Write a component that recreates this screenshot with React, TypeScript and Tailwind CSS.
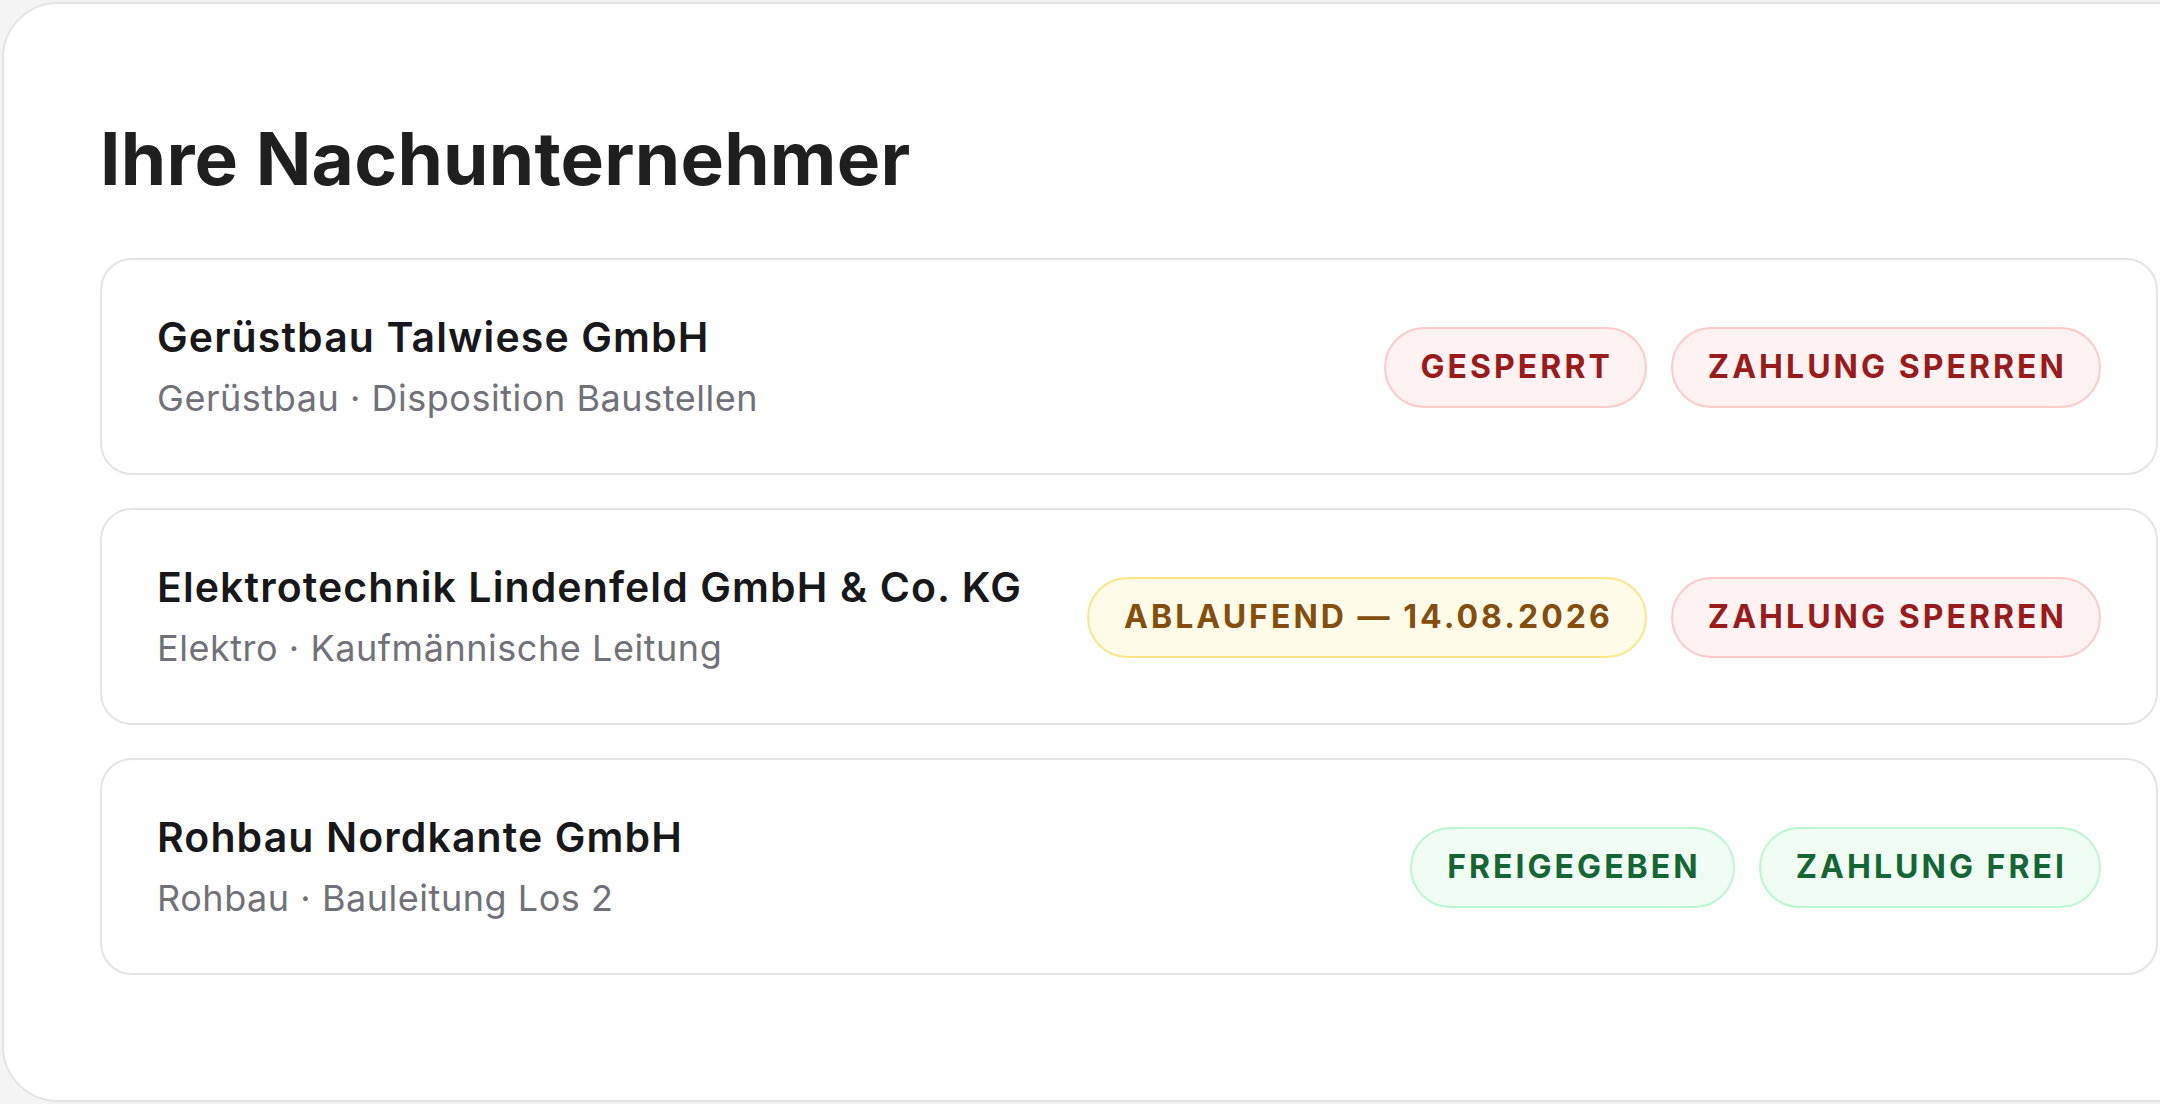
type Tone = 'red' | 'yellow' | 'green';

const toneClass: Record<Tone, string> = {
  red: 'bg-[#fef2f2] border-[#fecaca] text-[#991b1b]',
  yellow: 'bg-[#fefce8] border-[#fde68a] text-[#854d0e]',
  green: 'bg-[#f0fdf4] border-[#bbf7d0] text-[#166534]',
};

const subcontractors: {
  name: string;
  meta: string;
  status: { label: string; tone: Tone };
  payment: { label: string; tone: Tone };
}[] = [
  {
    name: 'Gerüstbau Talwiese GmbH',
    meta: 'Gerüstbau · Disposition Baustellen',
    status: { label: 'Gesperrt', tone: 'red' },
    payment: { label: 'Zahlung sperren', tone: 'red' },
  },
  {
    name: 'Elektrotechnik Lindenfeld GmbH & Co. KG',
    meta: 'Elektro · Kaufmännische Leitung',
    status: { label: 'Ablaufend — 14.08.2026', tone: 'yellow' },
    payment: { label: 'Zahlung sperren', tone: 'red' },
  },
  {
    name: 'Rohbau Nordkante GmbH',
    meta: 'Rohbau · Bauleitung Los 2',
    status: { label: 'Freigegeben', tone: 'green' },
    payment: { label: 'Zahlung frei', tone: 'green' },
  },
];

function Badge({ label, tone }: { label: string; tone: Tone }) {
  return (
    <span
      className={`inline-flex items-center rounded-full border-[2.5px] pl-[35px] pr-[32px] py-[18.5px] text-[32px] leading-[40px] font-bold uppercase tracking-[0.095em] whitespace-nowrap ${toneClass[tone]}`}
    >
      {label}
    </span>
  );
}

export default function App() {
  return (
    <div
      className="w-[2160px] h-[1104px] overflow-hidden bg-[#f4f4f5] pt-[2px] pl-[2px]"
      style={{ fontFamily: 'Inter, "Noto Sans", sans-serif' }}
    >
      <div className="w-[2254px] h-[1100px] flex-none bg-white border-2 border-[#e4e4e7] rounded-[56px] pl-[96px] pr-[96px] pt-[118px]">
        <h1 className="text-[73px] leading-none font-bold tracking-[0.003em] text-[#1f1f1f] mb-[63px]">
          Ihre Nachunternehmer
        </h1>
        <div className="flex flex-col gap-[33px]">
          {subcontractors.map((s) => (
            <div
              key={s.name}
              className="flex items-center justify-between border-2 border-[#e4e4e7] rounded-[32px] pl-[55px] pr-[55px] pt-[52px] pb-[51px]"
            >
              <div className="flex flex-col">
                <div className="text-[41px] leading-[50px] font-semibold tracking-[0.027em] text-[#18181b]">
                  {s.name}
                </div>
                <div className="mt-[12px] text-[36px] leading-[48px] tracking-[0.015em] text-[#71717a]">
                  {s.meta}
                </div>
              </div>
              <div className="flex items-center gap-[24px]">
                <Badge {...s.status} />
                <Badge {...s.payment} />
              </div>
            </div>
          ))}
        </div>
      </div>
    </div>
  );
}
